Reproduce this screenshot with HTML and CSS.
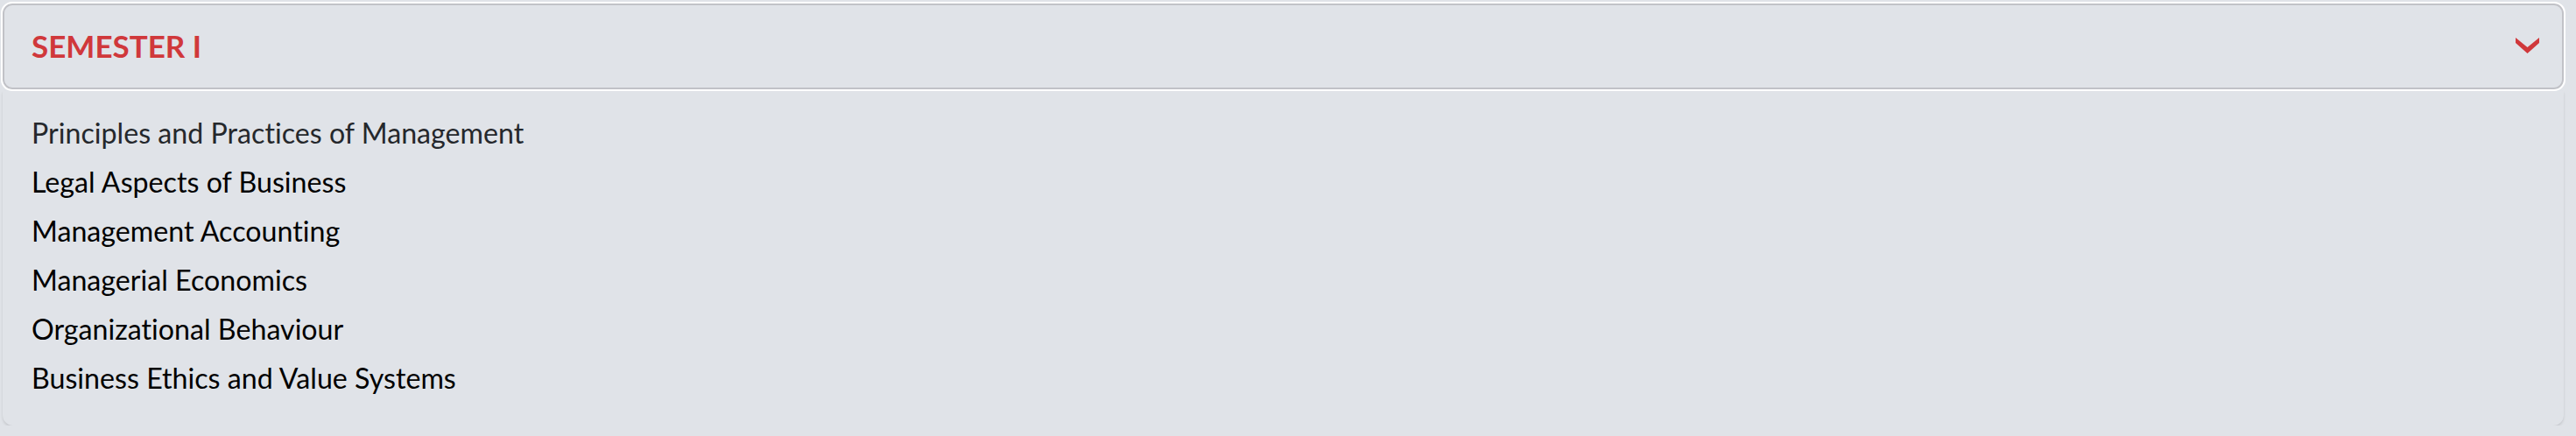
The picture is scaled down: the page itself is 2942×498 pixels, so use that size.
FILE: index.html
```html
<!DOCTYPE html>
<html lang="en">
<head>
    <meta charset="UTF-8">
    <meta name="viewport" content="width=device-width, initial-scale=1.0">
    <title>Semester I</title>
    <link rel="stylesheet" href="styles.css">
</head>
<body>

    <div class="accordion">
        <div class="accordion-header">
            <span class="accordion-title">SEMESTER I</span>
            <svg class="chevron" width="27" height="18" viewBox="0 0 27 18">
                <polygon points="0,0 13.5,11 27,0 27,6 13.5,18 0,6" fill="#d0383b"/>
            </svg>
        </div>
        <div class="accordion-body">
            <div class="subject first">Principles and Practices of Management</div>
            <div class="subject">Legal Aspects of Business</div>
            <div class="subject">Management Accounting</div>
            <div class="subject">Managerial Economics</div>
            <div class="subject">Organizational Behaviour</div>
            <div class="subject">Business Ethics and Value Systems</div>
        </div>
    </div>

</body>
</html>
```

FILE: styles.css
```css
body {
    margin: 0;
    background-color: #e0e3e8;
    font-family: Lato, "Liberation Sans", sans-serif;
    font-variant-ligatures: none;
}

.accordion {
    padding: 2px 12px 0 1px;
}

.accordion-header {
    display: flex;
    align-items: center;
    justify-content: space-between;
    height: 96px;
    padding: 0 28px 2px 33px;
    border: 2px solid #fff;
    border-radius: 13px;
    box-shadow: inset 0 0 0 2px #c1c2c7;
    background-color: #e0e3e8;
}

.accordion-title {
    font-size: 35px;
    font-weight: bold;
    color: #d0383b;
}

.chevron {
    display: block;
}

.accordion-body {
    margin: 0 2px;
    padding: 20px 33px 26px;
    background-color: #e0e3e8;
    border-radius: 0 0 12px 12px;
    box-shadow: 0 2px 3px rgba(0, 0, 0, 0.12);
}

.subject {
    font-size: 32.2px;
    line-height: 56px;
    color: #000;
}

.subject.first {
    color: #25282c;
}
```
